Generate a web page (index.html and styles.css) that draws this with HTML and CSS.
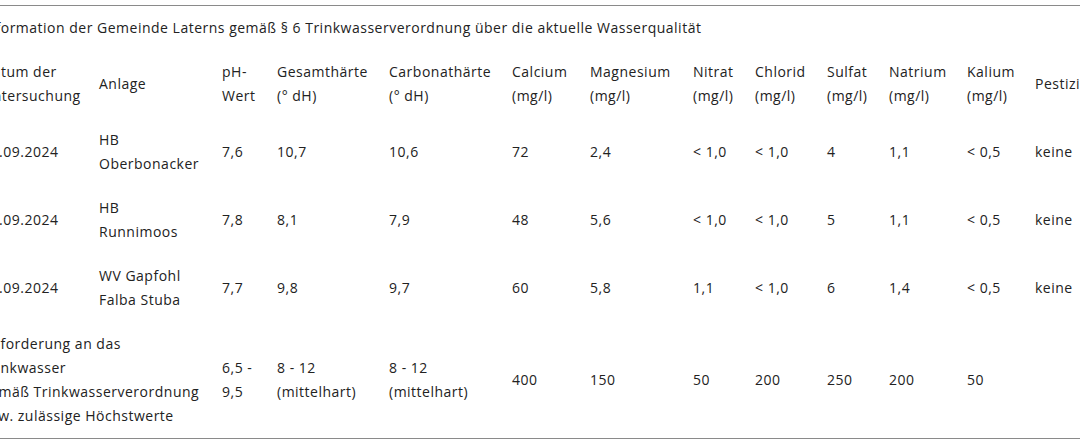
FILE: index.html
```html
<!DOCTYPE html>
<html lang="de">
<head>
<meta charset="utf-8">
<title>Wasserqualität Laterns</title>
<link rel="stylesheet" href="styles.css">
</head>
<body>
<div class="wrap">
  <table class="water">
    <caption>Information der Gemeinde Laterns gemäß § 6 Trinkwasserverordnung über die aktuelle Wasserqualität</caption>
    <colgroup>
      <col class="c-datum">
      <col class="c-anlage">
      <col class="c-ph">
      <col class="c-gesamt">
      <col class="c-carbonat">
      <col class="c-calcium">
      <col class="c-magnesium">
      <col class="c-nitrat">
      <col class="c-chlorid">
      <col class="c-sulfat">
      <col class="c-natrium">
      <col class="c-kalium">
      <col class="c-pestizide">
    </colgroup>
    <thead>
      <tr>
        <th>Datum der<br>Untersuchung</th>
        <th>Anlage</th>
        <th>pH-<br>Wert</th>
        <th>Gesamthärte<br>(° dH)</th>
        <th>Carbonathärte<br>(° dH)</th>
        <th>Calcium<br>(mg/l)</th>
        <th>Magnesium<br>(mg/l)</th>
        <th>Nitrat<br>(mg/l)</th>
        <th>Chlorid<br>(mg/l)</th>
        <th>Sulfat<br>(mg/l)</th>
        <th>Natrium<br>(mg/l)</th>
        <th>Kalium<br>(mg/l)</th>
        <th>Pestizide</th>
      </tr>
    </thead>
    <tbody>
      <tr>
        <td>12.09.2024</td>
        <td>HB<br>Oberbonacker</td>
        <td>7,6</td>
        <td>10,7</td>
        <td>10,6</td>
        <td>72</td>
        <td>2,4</td>
        <td>&lt; 1,0</td>
        <td>&lt; 1,0</td>
        <td>4</td>
        <td>1,1</td>
        <td>&lt; 0,5</td>
        <td>keine</td>
      </tr>
      <tr>
        <td>12.09.2024</td>
        <td>HB<br>Runnimoos</td>
        <td>7,8</td>
        <td>8,1</td>
        <td>7,9</td>
        <td>48</td>
        <td>5,6</td>
        <td>&lt; 1,0</td>
        <td>&lt; 1,0</td>
        <td>5</td>
        <td>1,1</td>
        <td>&lt; 0,5</td>
        <td>keine</td>
      </tr>
      <tr>
        <td>12.09.2024</td>
        <td>WV Gapfohl<br>Falba Stuba</td>
        <td>7,7</td>
        <td>9,8</td>
        <td>9,7</td>
        <td>60</td>
        <td>5,8</td>
        <td>1,1</td>
        <td>&lt; 1,0</td>
        <td>6</td>
        <td>1,4</td>
        <td>&lt; 0,5</td>
        <td>keine</td>
      </tr>
      <tr class="limits">
        <td colspan="2">Anforderung an das<br>Trinkwasser<br>gemäß Trinkwasserverordnung<br>bzw. zulässige Höchstwerte</td>
        <td>6,5 -<br>9,5</td>
        <td>8 - 12<br>(mittelhart)</td>
        <td>8 - 12<br>(mittelhart)</td>
        <td>400</td>
        <td>150</td>
        <td>50</td>
        <td>200</td>
        <td>250</td>
        <td>200</td>
        <td>50</td>
        <td></td>
      </tr>
    </tbody>
  </table>
</div>
</body>
</html>
```

FILE: styles.css
```css
html, body {
  margin: 0;
  padding: 0;
  background: #ffffff;
}

body {
  font-family: "Open Sans", "Noto Sans", "Liberation Sans", sans-serif;
  font-size: 14px;
  color: #222222;
  overflow: hidden;
}

.wrap {
  margin-top: 5px;
  border-top: 1px solid #8a8a8a;
  border-bottom: 1px solid #8a8a8a;
  overflow: hidden;
}

.water {
  margin-left: -28px;
  border-collapse: collapse;
  table-layout: fixed;
  width: 1172px;
  line-height: 24px;
  letter-spacing: 0.5px;
}

.water caption {
  text-align: left;
  padding: 10px 10px;
  white-space: nowrap;
}

.water th,
.water td {
  padding: 10px 10px;
  text-align: left;
  vertical-align: middle;
  font-weight: normal;
  white-space: nowrap;
}

.c-datum { width: 117px; }
.c-anlage { width: 123px; }
.c-ph { width: 55px; }
.c-gesamt { width: 112px; }
.c-carbonat { width: 123px; }
.c-calcium { width: 78px; }
.c-magnesium { width: 103px; }
.c-nitrat { width: 62px; }
.c-chlorid { width: 72px; }
.c-sulfat { width: 62px; }
.c-natrium { width: 78px; }
.c-kalium { width: 68px; }
.c-pestizide { width: 120px; }
```
